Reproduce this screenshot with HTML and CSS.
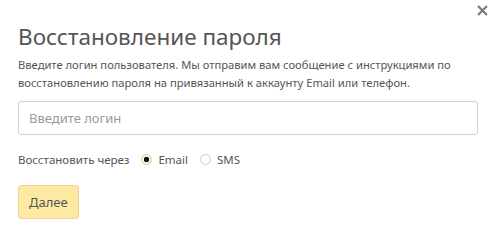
FILE: index.html
```html
<!DOCTYPE html>
<html lang="ru">
  <head>
    <meta charset="UTF-8" />
    <meta name="viewport" content="width=device-width, initial-scale=1.0" />
    <title>Восстановление пароля</title>
    <link rel="stylesheet" href="styles.css">
  </head>
  <body>
    <div class="modal">
      <a href="#" class="close-btn" title="Закрыть">
        <svg width="11" height="11" viewBox="0 0 11 11">
          <path d="M1 1 L10 10 M10 1 L1 10" stroke="#7a7a7a" stroke-width="2.2" />
        </svg>
      </a>

      <h2>Восстановление пароля</h2>
      <p class="hint">
        Введите логин пользователя. Мы отправим вам сообщение с инструкциями по
        восстановлению пароля на привязанный к аккаунту Email или телефон.
      </p>

      <input type="text" class="login-input" placeholder="Введите логин" />

      <div class="method-row">
        <span class="method-label">Восстановить через</span>
        <label class="radio">
          <input type="radio" name="method" value="email" checked />
          <span class="radio-mark"></span>
          Email
        </label>
        <label class="radio">
          <input type="radio" name="method" value="sms" />
          <span class="radio-mark"></span>
          SMS
        </label>
      </div>

      <button class="next-btn">Далее</button>
    </div>
  </body>
</html>
```

FILE: styles.css
```css
body {
  font-family: "Noto Sans", "Open Sans", sans-serif;
  background-color: #fff;
  margin: 0;
  padding: 0;
  color: #555;
}

.modal {
  position: relative;
  padding: 22px 22px 0 18px;
}

.close-btn {
  position: absolute;
  top: 5px;
  right: 12px;
  display: block;
  line-height: 0;
}

h2 {
  margin: 0;
  font-size: 22.5px;
  font-weight: normal;
  color: #555;
  line-height: 30px;
}

.hint {
  margin: 4px 0 9px;
  font-size: 11.2px;
  line-height: 18px;
  color: #555;
}

.login-input {
  display: block;
  box-sizing: border-box;
  width: 100%;
  height: 34px;
  padding: 0 10px;
  border: 1px solid #d2d2d2;
  border-radius: 3px;
  font-family: inherit;
  font-size: 13px;
  color: #555;
}

.login-input::placeholder {
  color: #9a9a9a;
}

.method-row {
  display: flex;
  align-items: center;
  margin-top: 15px;
  font-size: 11.5px;
  height: 18px;
}

.method-label {
  margin-right: 12px;
}

.radio {
  display: flex;
  align-items: center;
  margin-right: 12px;
  cursor: pointer;
}

.radio input {
  display: none;
}

.radio-mark {
  width: 11px;
  height: 11px;
  border: 1px solid #ccc;
  border-radius: 50%;
  margin-right: 6px;
  box-sizing: border-box;
  background: #fff;
}

.radio input:checked + .radio-mark {
  border-color: #d9cfa8;
  background: radial-gradient(circle, #111 2.5px, #fbf6de 3px);
}

.next-btn {
  margin-top: 17px;
  height: 34px;
  padding: 0 10px;
  background-color: #fde9a2;
  border: 1px solid #ead699;
  border-radius: 3px;
  font-family: inherit;
  font-size: 13px;
  color: #555;
  cursor: pointer;
}
```
